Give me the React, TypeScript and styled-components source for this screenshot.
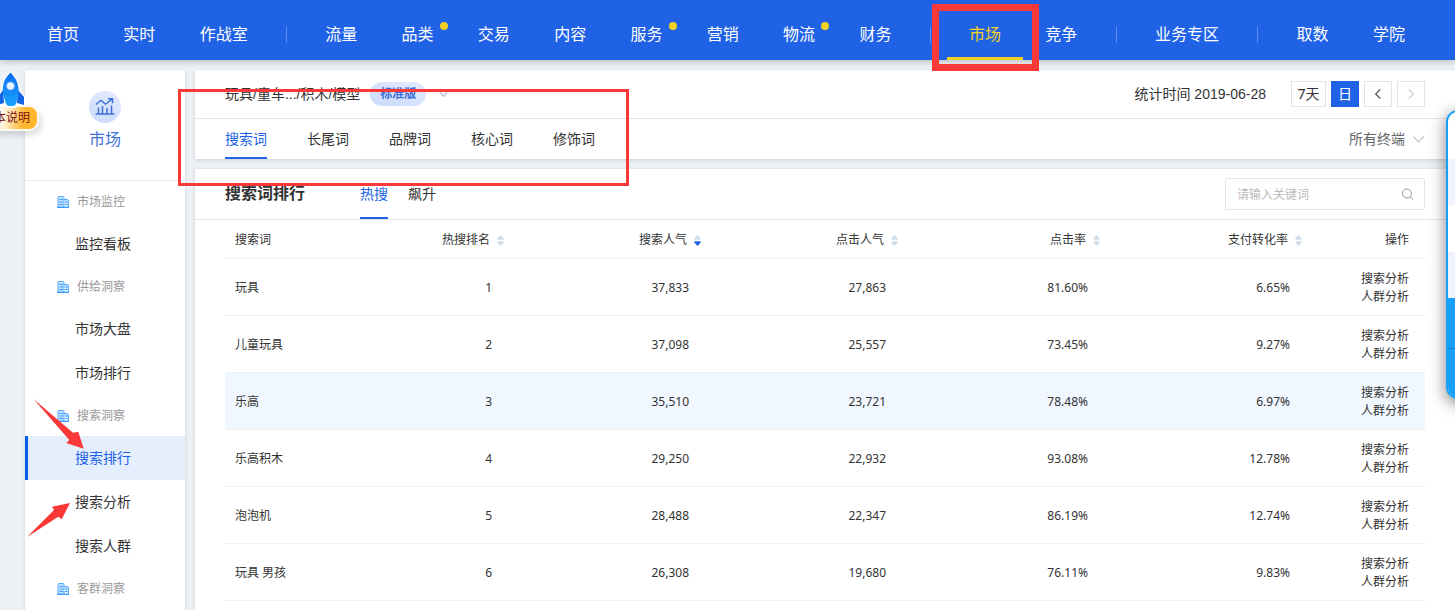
import React from "react";
import styled, { createGlobalStyle, css } from "styled-components";

const GlobalStyle = createGlobalStyle`
  * { box-sizing: border-box; }
  body {
    margin: 0;
    background: #edf0f5;
    color: #333;
    font: 14px/20px "Liberation Sans", "Noto Sans CJK SC", sans-serif;
  }
  button, input, select { font: inherit; color: inherit; }
  a { color: inherit; text-decoration: none; }
`;

const Page = styled.div`
  position: relative;
  min-height: 100vh;
  display: flex;
  flex-direction: column;
  overflow-x: hidden;
`;

const Header = styled.header`
  position: relative;
  z-index: 1;
  height: 60px;
  padding: 0 28px 0 25px;
  background: #2062e6;
  box-shadow: 0 2px 6px rgba(0, 0, 0, 0.2);
`;

const Nav = styled.nav`
  height: 100%;
  display: flex;
  justify-content: space-between;
`;

const NavLink = styled.a<{ $active?: boolean }>`
  position: relative;
  padding: 10px 22px 0;
  font-size: 16px;
  line-height: 50px;
  white-space: nowrap;
  color: ${(p) => (p.$active ? "#f5d020" : "#fff")};
  ${(p) => p.$active && css`box-shadow: inset 0 -3px #f5d020;`}
`;

const NavDot = styled.span`
  position: absolute;
  top: 22px;
  right: 8px;
  width: 8px;
  height: 8px;
  border-radius: 50%;
  background: #f5d020;
`;

const NavDivider = styled.span`
  width: 1px;
  height: 16px;
  margin: 27px 16px 0;
  background: #5e8dee;
`;

const Body = styled.div`
  flex: 1;
  display: flex;
  gap: 10px;
  padding: 10px 0 0 25px;
`;

const Sidebar = styled.aside`
  flex: none;
  width: 160px;
  background: #fff;
  box-shadow: 0 1px 4px rgba(0, 0, 0, 0.12);
`;

const SideHead = styled.div`
  height: 111px;
  padding-top: 21px;
  border-bottom: 1px solid #ebebeb;
  display: flex;
  flex-direction: column;
  align-items: center;
  gap: 5px;
  font-size: 16px;
  line-height: 24px;
  color: #3f70d8;
`;

const SideBadge = styled.span`
  width: 32px;
  height: 32px;
  border-radius: 50%;
  display: grid;
  place-items: center;
  background: linear-gradient(200deg, #e2ebff, #ccdafc);
`;

const SideTitle = styled.h3`
  margin: 0;
  height: 41px;
  padding-left: 32px;
  display: flex;
  align-items: center;
  gap: 8px;
  font-size: 12px;
  font-weight: 400;
  color: #999;
`;

const SideLink = styled.a<{ $active?: boolean }>`
  display: block;
  height: 44px;
  line-height: 44px;
  padding-left: 50px;
  color: ${(p) => (p.$active ? "#2062e6" : "#333")};
  ${(p) => p.$active && css`
    background: #e5eefc;
    box-shadow: inset 3px 0 #0a5fe8;
  `}
`;

const Main = styled.main`
  flex: 1;
  min-width: 0;
  display: flex;
  flex-direction: column;
  gap: 10px;
`;

const Card = styled.section<{ $grow?: boolean }>`
  flex: ${(p) => (p.$grow ? "1" : "none")};
  background: #fff;
  box-shadow: 0 1px 4px rgba(0, 0, 0, 0.14);
`;

const Bar = styled.div<{ $height: number; $line?: boolean }>`
  height: ${(p) => p.$height}px;
  padding: 0 30px;
  display: flex;
  align-items: center;
  justify-content: space-between;
  border-bottom: ${(p) => (p.$line ? "1px solid #e6e6e6" : "0")};
`;

const Group = styled.div<{ $gap: number }>`
  height: 100%;
  display: flex;
  align-items: center;
  gap: ${(p) => p.$gap}px;
`;

const Category = styled.button`
  display: flex;
  align-items: center;
  gap: 10px;
  padding: 0;
  border: 0;
  background: none;
`;

const Edition = styled.span`
  height: 24px;
  margin-right: 3px;
  padding: 0 10px;
  border-radius: 12px;
  background: linear-gradient(200deg, #e2ebff, #ccdafc);
  font-size: 12px;
  line-height: 24px;
  font-weight: 700;
  color: #3f70d8;
`;

const DateText = styled.span`
  margin-right: 20px;
`;

const DateButton = styled.button<{ $active?: boolean; $wide?: boolean }>`
  width: ${(p) => (p.$wide ? 35 : 28)}px;
  height: 26px;
  padding: 0;
  display: grid;
  place-items: center;
  font-family: "Noto Sans", "Noto Sans CJK SC", sans-serif;
  line-height: 20px;
  border: 1px solid ${(p) => (p.$active ? "#2062e6" : "#e4e4e4")};
  background: ${(p) => (p.$active ? "#2062e6" : "#fff")};
  color: ${(p) => (p.$active ? "#fff" : "#333")};
`;

const Tab = styled.button<{ $active?: boolean }>`
  height: 100%;
  padding: 0;
  border: 0;
  background: none;
  color: ${(p) => (p.$active ? "#2062e6" : "#333")};
  box-shadow: ${(p) => (p.$active ? "inset 0 -2px #2062e6" : "none")};
`;

const Terminal = styled.label`
  display: flex;
  align-items: center;
  gap: 6px;
  color: #666;
`;

const TerminalSelect = styled.select`
  width: 57px;
  padding: 0;
  border: 0;
  background: none;
  appearance: none;
`;

const Title = styled.h2`
  margin: 0 35px 0 0;
  font-size: 16px;
  font-weight: 700;
`;

const SearchBox = styled.label`
  width: 200px;
  height: 32px;
  padding: 0 10px 0 11px;
  display: flex;
  align-items: center;
  border: 1px solid #e4e4e4;
  border-radius: 2px;
`;

const SearchInput = styled.input`
  flex: 1;
  min-width: 0;
  padding: 2px 0 0;
  border: 0;
  outline: 0;
  background: none;
  font-size: 12px;
  &::placeholder { color: #bbb; }
`;

const TableWrap = styled.div`
  padding: 0 30px;
`;

const Table = styled.table`
  width: 100%;
  table-layout: fixed;
  border-collapse: separate;
  border-spacing: 0;
  font: 12px/18px "Noto Sans", "Noto Sans CJK SC", sans-serif;
`;

const Col = styled.col<{ $width?: number }>`
  width: ${(p) => (p.$width ? `${p.$width}px` : "auto")};
`;

type Kind = "name" | "number" | "action";

const padding = { name: "2px 10px 0", number: "2px 12px 0 0", action: "2px 16px 0 0" };

const Th = styled.th<{ $kind: Kind }>`
  height: 39px;
  padding: ${(p) => (p.$kind === "number" ? "2px 0 0" : padding[p.$kind])};
  border-bottom: 1px solid #f0f0f0;
  font-weight: 400;
  text-align: ${(p) => (p.$kind === "name" ? "left" : "right")};
`;

const Td = styled.td<{ $kind: Kind }>`
  height: 57px;
  padding: ${(p) => padding[p.$kind]};
  border-bottom: 1px solid #f0f0f0;
  text-align: ${(p) => (p.$kind === "name" ? "left" : "right")};
`;

const Row = styled.tr<{ $hover?: boolean }>`
  background: ${(p) => (p.$hover ? "#f0f7ff" : "none")};
`;

const SortButton = styled.button`
  display: inline-flex;
  align-items: center;
  gap: 7px;
  padding: 0;
  border: 0;
  background: none;
  vertical-align: middle;
`;

const ActionLink = styled.a`
  display: block;
`;

const Release = styled.a`
  position: absolute;
  z-index: 2;
  top: 71px;
  left: -30px;
  width: 69px;
  font-size: 12px;
  color: #7c1010;
`;

const Rocket = styled.svg`
  display: block;
  margin-left: 26px;
  overflow: visible;
`;

const ReleaseLabel = styled.span`
  display: block;
  height: 26px;
  margin-top: -3px;
  padding-left: 10px;
  border: 2px solid #fffaf0;
  border-radius: 10px;
  background: linear-gradient(100deg, #fff 40%, #ffe9c0 55%, #ffb62e 78%);
  box-shadow: 2px 4px 6px rgba(0, 0, 0, 0.15);
  line-height: 22px;
`;

const Drawer = styled.aside`
  position: absolute;
  z-index: 2;
  top: 110px;
  right: -20px;
  width: 29px;
  height: 289px;
  border: 2px solid #18a0ff;
  border-radius: 12px;
  overflow: hidden;
  background: #fff;
  box-shadow: 0 4px 16px rgba(0, 0, 0, 0.5);
`;

const DrawerCell = styled.div<{ $tone: "plain" | "tint" | "blue"; $divided?: boolean }>`
  height: ${(p) => (p.$tone === "blue" ? 50 : p.$tone === "tint" ? 46 : 47)}px;
  background: ${(p) => ({ plain: "#fff", tint: "#f0f3fb", blue: "#18a0ff" })[p.$tone]};
  border-top: ${(p) => (p.$divided ? "1px solid #1483d0" : "0")};
`;

const Mark = styled.div<{ $x: number; $y: number; $w: number; $h: number; $line: number }>`
  position: absolute;
  z-index: 3;
  left: ${(p) => p.$x}px;
  top: ${(p) => p.$y}px;
  width: ${(p) => p.$w}px;
  height: ${(p) => p.$h}px;
  border: ${(p) => p.$line}px solid #fb3838;
  pointer-events: none;
`;

const Arrows = styled.svg`
  position: absolute;
  z-index: 3;
  left: 25px;
  top: 395px;
  pointer-events: none;
`;

const Chevron = ({ dir, color, w }: { dir: "left" | "right" | "down"; color: string; w: number }) => {
  const d = { left: "M8.5 1.5 3.5 6.5l5 5", right: "M3.5 1.5l5 5-5 5", down: "M.8 3.5 6 9l5.200-5.500" }[dir];
  return (
    <svg width={w} height={w} viewBox="0 0 12 13" fill="none" stroke={color} strokeWidth={w < 12 ? 2.2 : 1.4} aria-hidden="true">
      <path d={d} />
    </svg>
  );
};

const Building = () => (
  <svg width="12" height="12" viewBox="0 0 12 12" aria-hidden="true">
    <path d="M1 11.500V1.500Q1 .5 2 .5h4q1 0 1 1v10M7 3.500h3q1.500 0 1.500 1.500v6.500" fill="#bfe0ff" stroke="#58adff" />
    <path d="M0 11.300h12" stroke="#3d9dff" strokeWidth="1.400" />
    <path d="M2.500 3.500h3.500M2.500 6h3.500M2.500 8.500h3.500M8 6h2.500M8 8.500h2.500" stroke="#3d9dff" strokeWidth="1.200" />
  </svg>
);

const MarketIcon = () => (
  <svg width="20" height="18" viewBox="0 0 20 18" fill="none" stroke="#3f70d8" strokeWidth="1.500" aria-hidden="true">
    <path d="M.5 16h19M3.500 16V9.500M7.500 16V8M12 16v-6M16.500 16V7.500M1 6.500l4-3.500q1-1 2 0l2.500 2.500q1 1 2 0L17 1M13 .8h4.500v4.500" />
  </svg>
);

const SortIcon = ({ down }: { down?: boolean }) => (
  <svg width="7" height="11" viewBox="0 0 7 11" aria-hidden="true">
    <path d="M3.500 0 6.500 3.300v1.500h-6V3.300z" fill="#d0dde8" />
    <path d="M3.500 11 .5 7.700V6.200h6v1.500z" fill={down ? "#2062e6" : "#d0dde8"} />
  </svg>
);

type NavItem = { label: string; dot?: boolean; active?: boolean } | null;

const navItems: NavItem[] = [
  { label: "首页" },
  { label: "实时" },
  { label: "作战室" },
  null,
  { label: "流量" },
  { label: "品类", dot: true },
  { label: "交易" },
  { label: "内容" },
  { label: "服务", dot: true },
  { label: "营销" },
  { label: "物流", dot: true },
  { label: "财务" },
  null,
  { label: "市场", active: true },
  { label: "竞争" },
  null,
  { label: "业务专区" },
  null,
  { label: "取数" },
  { label: "学院" },
];

const sideGroups = [
  { title: "市场监控", links: ["监控看板"] },
  { title: "供给洞察", links: ["市场大盘", "市场排行"] },
  { title: "搜索洞察", links: ["搜索排行", "搜索分析", "搜索人群"] },
  { title: "客群洞察", links: [] },
];

const tabs = ["搜索词", "长尾词", "品牌词", "核心词", "修饰词"];
const sortable = ["热搜排名", "搜索人气", "点击人气", "点击率", "支付转化率"];

const rows = [
  ["玩具", "1", "37,833", "27,863", "81.60%", "6.65%"],
  ["儿童玩具", "2", "37,098", "25,557", "73.45%", "9.27%"],
  ["乐高", "3", "35,510", "23,721", "78.48%", "6.97%"],
  ["乐高积木", "4", "29,250", "22,932", "93.08%", "12.78%"],
  ["泡泡机", "5", "28,488", "22,347", "86.19%", "12.74%"],
  ["玩具 男孩", "6", "26,308", "19,680", "76.11%", "9.83%"],
];

export default function App() {
  return (
    <Page>
      <GlobalStyle />
      <Header>
        <Nav>
          {navItems.map((item, i) =>
            item ? (
              <NavLink key={i} href="#" $active={item.active}>
                {item.label}
                {item.dot && <NavDot />}
              </NavLink>
            ) : (
              <NavDivider key={i} />
            )
          )}
        </Nav>
      </Header>

      <Body>
        <Sidebar>
          <SideHead>
            <SideBadge><MarketIcon /></SideBadge>
            市场
          </SideHead>
          {sideGroups.map((group) => (
            <nav key={group.title}>
              <SideTitle><Building />{group.title}</SideTitle>
              {group.links.map((link) => (
                <SideLink key={link} href="#" $active={link === "搜索排行"}>{link}</SideLink>
              ))}
            </nav>
          ))}
        </Sidebar>

        <Main>
          <Card>
            <Bar $height={49} $line>
              <Category>
                玩具/童车.../积木/模型
                <Edition>标准版</Edition>
                <Chevron dir="down" color="#b4c2d2" w={9} />
              </Category>
              <Group $gap={5}>
                <DateText>统计时间 2019-06-28</DateText>
                <DateButton $wide>7天</DateButton>
                <DateButton $active>日</DateButton>
                <DateButton aria-label="前一天"><Chevron dir="left" color="#555" w={12} /></DateButton>
                <DateButton aria-label="后一天" disabled><Chevron dir="right" color="#ccc" w={12} /></DateButton>
              </Group>
            </Bar>
            <Bar $height={40}>
              <Group $gap={40}>
                {tabs.map((tab, i) => <Tab key={tab} $active={i === 0}>{tab}</Tab>)}
              </Group>
              <Terminal>
                <TerminalSelect aria-label="终端"><option>所有终端</option></TerminalSelect>
                <Chevron dir="down" color="#ccc" w={13} />
              </Terminal>
            </Bar>
          </Card>

          <Card $grow>
            <Bar $height={51} $line>
              <Group $gap={20}>
                <Title>搜索词排行</Title>
                <Tab $active>热搜</Tab>
                <Tab>飙升</Tab>
              </Group>
              <SearchBox>
                <SearchInput type="text" placeholder="请输入关键词" aria-label="关键词" />
                <svg width="13" height="13" viewBox="0 0 13 13" fill="none" stroke="#999" aria-hidden="true">
                  <circle cx="6" cy="5.500" r="4.500" />
                  <path d="M9.200 8.800l2.800 3" />
                </svg>
              </SearchBox>
            </Bar>
            <TableWrap>
              <Table>
                <colgroup>
                  <Col />
                  <Col $width={197} />
                  <Col $width={197} />
                  <Col $width={197} />
                  <Col $width={202} />
                  <Col $width={202} />
                  <Col $width={123} />
                </colgroup>
                <thead>
                  <tr>
                    <Th $kind="name">搜索词</Th>
                    {sortable.map((label, i) => (
                      <Th key={label} $kind="number">
                        <SortButton>{label}<SortIcon down={i === 1} /></SortButton>
                      </Th>
                    ))}
                    <Th $kind="action">操作</Th>
                  </tr>
                </thead>
                <tbody>
                  {rows.map((row, r) => (
                    <Row key={row[0]} $hover={r === 2}>
                      {row.map((cell, c) => (
                        <Td key={c} $kind={c === 0 ? "name" : "number"}>{cell}</Td>
                      ))}
                      <Td $kind="action">
                        <ActionLink href="#">搜索分析</ActionLink>
                        <ActionLink href="#">人群分析</ActionLink>
                      </Td>
                    </Row>
                  ))}
                </tbody>
              </Table>
            </TableWrap>
          </Card>
        </Main>
      </Body>

      <Release href="#">
        <Rocket width="30" height="37" viewBox="0 0 30 37" aria-hidden="true">
          <defs>
            <linearGradient id="hull" x1="0" y1="0" x2="0" y2="1">
              <stop offset="0" stopColor="#0a6cf0" />
              <stop offset="1" stopColor="#1aa4ff" />
            </linearGradient>
          </defs>
          <path d="M14.500 1C9 6 6.500 12 6.500 20L2 26v8l7-1 2 3h8l2-3 7 1v-8l-5-6C23 12 20 6 14.500 1z" fill="#fff" stroke="#fff" strokeWidth="2" />
          <path d="M7 19 2 26v8l6-2zM22 19l6 7v8l-7-2z" fill="#1263e6" />
          <path d="M14.500 1.500C8.500 7 6 14 7 23l3 10 2 2h6l2-2 2.500-10C23.500 14 20 7 14.500 1.500z" fill="url(#hull)" />
          <circle cx="14.500" cy="15" r="4" fill="#e8f4ff" stroke="#7fb5f5" />
        </Rocket>
        <ReleaseLabel>版本说明</ReleaseLabel>
      </Release>

      <Drawer>
        <DrawerCell $tone="plain" />
        <DrawerCell $tone="tint" />
        <DrawerCell $tone="plain" />
        <DrawerCell $tone="tint" />
        <DrawerCell $tone="blue" />
        <DrawerCell $tone="blue" $divided />
      </Drawer>

      <Mark $x={932} $y={4} $w={107} $h={67} $line={7} />
      <Mark $x={178} $y={89} $w={451} $h={97} $line={3} />
      <Arrows width="64" height="145" viewBox="25 395 64 145" fill="#fb3838" aria-hidden="true">
        <path d="M33.500 399l39.500 33.700 5.300-1 5.400 17-17.400-5.700 3-3z" />
        <path d="M27 537l27-27-2-3.300L70 503l-8.300 16.300-3.400-2.600z" />
      </Arrows>
    </Page>
  );
}
